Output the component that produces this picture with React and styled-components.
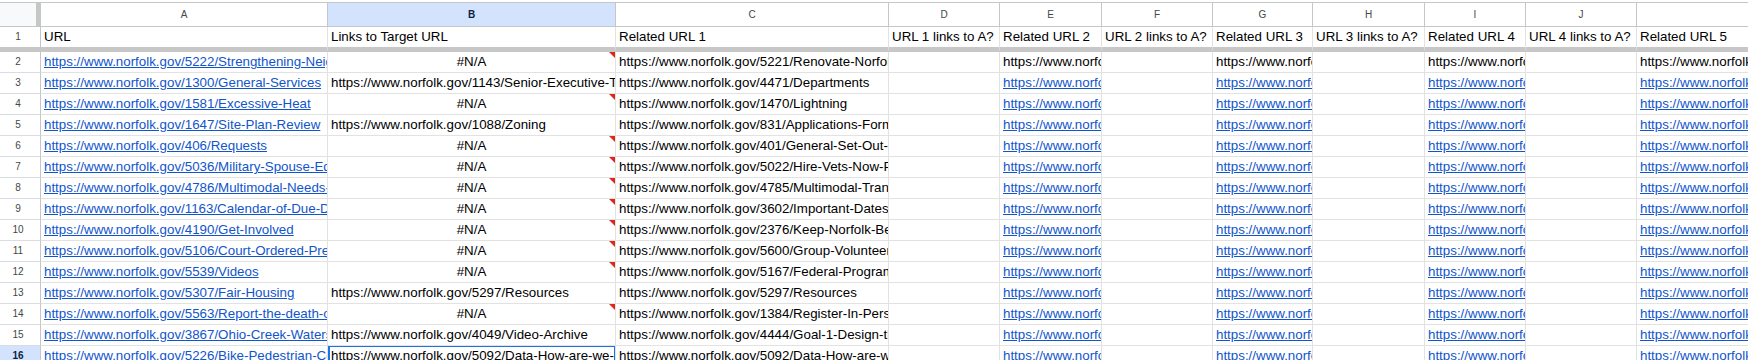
import styled, { createGlobalStyle } from "styled-components";

const GlobalStyle = createGlobalStyle`
    html, body {
        margin: 0;
        background: #fff;
        overflow: hidden;
    }
    body {
        font-family: "Liberation Sans", Arial, sans-serif;
    }
`

const colWidths = [287, 288, 273, 111, 102, 111, 100, 112, 101, 111, 220]
const letters = ['A', 'B', 'C', 'D', 'E', 'F', 'G', 'H', 'I', 'J', 'K']
const titles = ['URL', 'Links to Target URL', 'Related URL 1', 'URL 1 links to A?', 'Related URL 2', 'URL 2 links to A?', 'Related URL 3', 'URL 3 links to A?', 'Related URL 4', 'URL 4 links to A?', 'Related URL 5']

const base = 'https://www.norfolk.gov/'

// [A page, B value (null = #N/A), C value]
const rows = [
    ['5222/Strengthening-Neighborhoods', null, '5221/Renovate-Norfolk'],
    ['1300/General-Services', '1143/Senior-Executive-Team', '4471/Departments'],
    ['1581/Excessive-Heat', null, '1470/Lightning'],
    ['1647/Site-Plan-Review', '1088/Zoning', '831/Applications-Forms'],
    ['406/Requests', null, '401/General-Set-Out-Guidelines'],
    ['5036/Military-Spouse-Education', null, '5022/Hire-Vets-Now-Program'],
    ['4786/Multimodal-Needs-Assessment', null, '4785/Multimodal-Transportation'],
    ['1163/Calendar-of-Due-Dates', null, '3602/Important-Dates'],
    ['4190/Get-Involved', null, '2376/Keep-Norfolk-Beautiful'],
    ['5106/Court-Ordered-Pretrial', null, '5600/Group-Volunteer'],
    ['5539/Videos', null, '5167/Federal-Programs'],
    ['5307/Fair-Housing', '5297/Resources', '5297/Resources'],
    ['5563/Report-the-death-of-a-resident', null, '1384/Register-In-Person'],
    ['3867/Ohio-Creek-Watershed', '4049/Video-Archive', '4444/Goal-1-Design-the-City'],
    ['5226/Bike-Pedestrian-Commission', '5092/Data-How-are-we-doing', '5092/Data-How-are-we-doing'],
]

export default function App(){
    return (
        <>
            <GlobalStyle/>
            <Viewport>
                <Sheet cols={colWidths}>
                    <Corner/>
                    {letters.map((l, i) => (
                        <ColHeader key={l} $active={l === 'B'}>{i < 10 ? l : ''}</ColHeader>
                    ))}

                    <RowHeader $frozen>1</RowHeader>
                    {titles.map(t => <Cell key={t} $frozen>{t}</Cell>)}

                    {rows.map(([a, b, c], i) => {
                        const n = i + 2
                        const last = n === 16
                        return [
                            <RowHeader key={'h' + n} $active={last}>{n}</RowHeader>,
                            <Cell key={'a' + n}><Link>{base + a}</Link></Cell>,
                            b === null
                                ? <Cell key={'b' + n} $align="center" $error>#N/A</Cell>
                                : <Cell key={'b' + n} $selected={last}>{base + b}</Cell>,
                            <Cell key={'c' + n}>{base + c}</Cell>,
                            ...[0, 1, 2, 3].flatMap(k => [
                                <Cell key={'e' + n + k}/>,
                                <Cell key={'r' + n + k}>
                                    {n === 2 ? base : <Link>{base}</Link>}
                                </Cell>
                            ])
                        ]
                    })}
                </Sheet>
            </Viewport>
        </>
    )
}

const Viewport = styled.div`
    width: 100vw;
    height: 100vh;
    overflow: hidden;
    padding-top: 2px;
    box-sizing: border-box;
`

const Sheet = styled.div`
    display: grid;
    grid-template-columns: 41px ${props => props.cols.map(w => w + 'px').join(' ')};
    grid-auto-rows: 21px;
    grid-template-rows: 25px 25px;
    width: max-content;
    &>*{
        box-sizing: border-box;
    }
`

const Corner = styled.div`
    background-color: #f8f9fa;
    border-top: 1px solid #c4c7c5;
    border-bottom: 1px solid #c4c7c5;
    border-right: 5px solid #c4c7c5;
`

const ColHeader = styled.div`
    border-top: 1px solid #c4c7c5;
    border-bottom: 1px solid #c4c7c5;
    border-right: 1px solid #c4c7c5;
    background-color: ${props => props.$active ? '#d3e3fd' : '#fff'};
    color: ${props => props.$active ? '#0b1f44' : '#444746'};
    font-weight: ${props => props.$active ? 700 : 400};
    font-size: 10px;
    line-height: 23px;
    text-align: center;
`

const RowHeader = styled.div`
    border-right: 1px solid #c4c7c5;
    border-bottom: ${props => props.$frozen ? '5px solid #c7c7c7' : '1px solid #dadce0'};
    background-color: ${props => props.$active ? '#d3e3fd' : '#fff'};
    color: ${props => props.$active ? '#0b1f44' : '#444746'};
    font-weight: ${props => props.$active ? 700 : 400};
    font-size: 10px;
    line-height: 20px;
    padding-right: 4px;
    text-align: center;
`

const Cell = styled.div`
    position: relative;
    border-right: 1px solid #e2e2e2;
    border-bottom: ${props => props.$frozen ? '5px solid #c7c7c7' : '1px solid #e2e2e2'};
    padding: 0 3px;
    font-size: 13.33px;
    line-height: 20px;
    color: #000;
    white-space: nowrap;
    overflow: ${props => props.$selected ? 'visible' : 'hidden'};
    text-align: ${props => props.$align || 'left'};
    ${props => props.$selected && `
        overflow: hidden;
        &::before{
            content: '';
            position: absolute;
            top: -1px;
            left: 0;
            right: -1px;
            bottom: -1px;
            border: 2px solid #1a73e8;
        }
    `}
    ${props => props.$error && `
        &::after{
            content: '';
            position: absolute;
            top: 0;
            right: 0;
            width: 0;
            height: 0;
            border-left: 6px solid transparent;
            border-top: 6px solid #e0251b;
        }
    `}
`

const Link = styled.span`
    color: #1155cc;
    text-decoration: underline;
`
